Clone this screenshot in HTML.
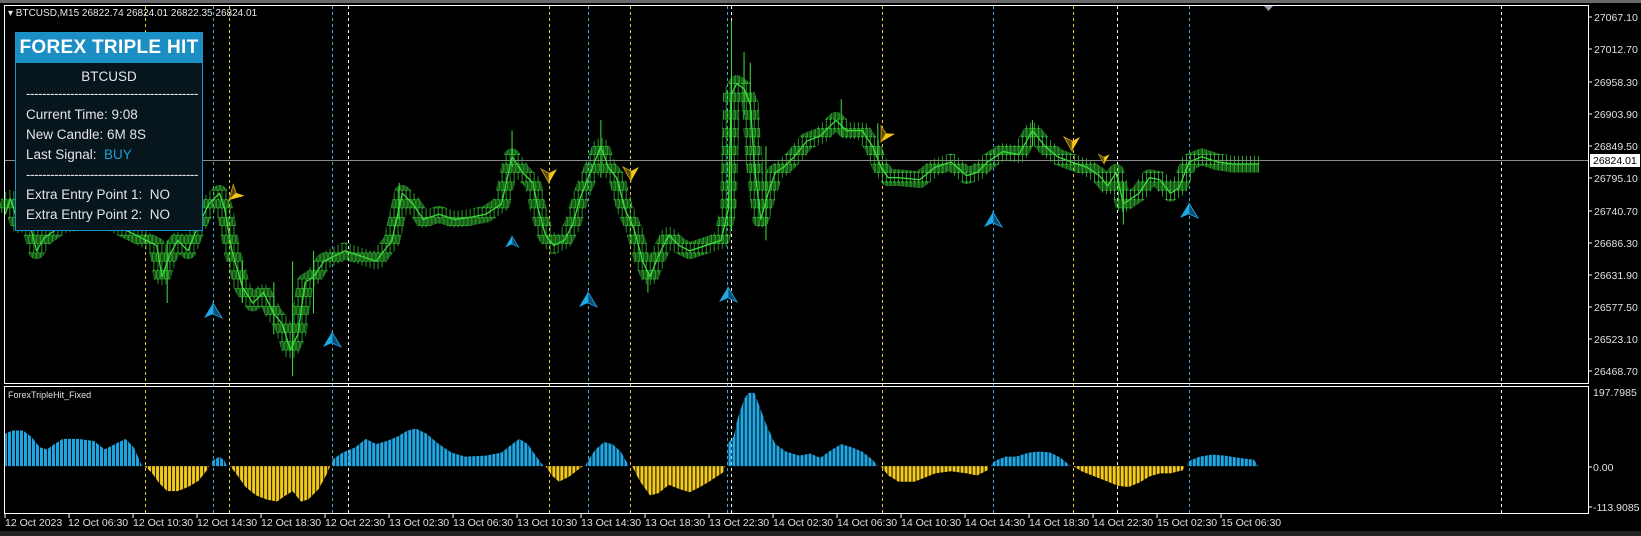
<!DOCTYPE html>
<html><head><meta charset="utf-8"><style>
html,body{margin:0;padding:0;background:#000;width:1641px;height:536px;overflow:hidden;font-family:"Liberation Sans",Arial,sans-serif}
#p{position:absolute;left:15px;top:32px;width:188px;height:199px;background:#07151c;border:1px solid #1d93c6;box-sizing:border-box}
#p .t{height:30px;background:#1b8fc3;color:#fff;font-weight:bold;font-size:19px;letter-spacing:0.3px;text-align:center;line-height:30px;white-space:nowrap;font-family:"Liberation Sans",sans-serif}
#p .l{position:absolute;left:10px;color:#e4e4e4;font-size:13.5px;white-space:nowrap}
</style></head><body>
<svg width="1641" height="536" style="position:absolute;left:0;top:0" xmlns="http://www.w3.org/2000/svg">
<defs>
<pattern id="bl" patternUnits="userSpaceOnUse" width="3.83" height="10"><rect width="2.9" height="10" fill="#1ea8e6"/></pattern>
<pattern id="yl" patternUnits="userSpaceOnUse" width="3.83" height="10"><rect width="2.9" height="10" fill="#f5cc18"/></pattern>
<pattern id="cd" patternUnits="userSpaceOnUse" width="3.83" height="17"><rect x="1.4" width="0.7" height="17" fill="#34c834"/><rect x="0.5" y="4" width="2.6" height="8" fill="none" stroke="#3ee03e" stroke-width="0.6"/></pattern>
</defs>
<rect x="0" y="0" width="1641" height="3" fill="#6a6a6a"/>
<rect x="0" y="531" width="1641" height="5" fill="#222"/>
<path d="M4.5 5.5H1588.5V383.5H4.5Z M4.5 386.5H1588.5V513.5H4.5Z" fill="none" stroke="#fff" stroke-width="1"/>
<g stroke-width="1" stroke-dasharray="3 3" fill="none">
<path d="M145.5 6V513M229.5 6V513M549.5 6V513M630.5 6V513M882.5 6V513M1073.5 6V513" stroke="#e8c64a"/>
<path d="M213.5 6V513M332.5 6V513M588.5 6V513M727.5 6V513M993.5 6V513M1189.5 6V513" stroke="#4aa6d8"/>
<path d="M348.5 6V513M731.5 6V513M1117.5 6V513M1501.5 6V513" stroke="#fff"/>
</g>
<line x1="5" y1="160.5" x2="1588" y2="160.5" stroke="#8a8a8a"/>
<rect x="1590" y="154" width="50" height="13" fill="#fff"/>
<text x="1593" y="164" font-size="10.5" fill="#000">26824.01</text>
<g font-size="10.5" fill="#e0e0e0">
<text x="1594" y="21">27067.10</text><text x="1594" y="53">27012.70</text><text x="1594" y="86">26958.30</text><text x="1594" y="118">26903.90</text><text x="1594" y="150">26849.50</text><text x="1594" y="182">26795.10</text><text x="1594" y="215">26740.70</text><text x="1594" y="247">26686.30</text><text x="1594" y="279">26631.90</text><text x="1594" y="311">26577.50</text><text x="1594" y="343">26523.10</text><text x="1594" y="375">26468.70</text>
<text x="1593" y="396">197.7985</text><text x="1593" y="471">0.00</text><text x="1593" y="511">-113.9085</text>
</g>
<g stroke="#fff"><path d="M1588 17h4M1588 49h4M1588 82h4M1588 114h4M1588 146h4M1588 178h4M1588 211h4M1588 243h4M1588 275h4M1588 307h4M1588 339h4M1588 371h4M1588 467h4M1588 507h4"/></g>
<g font-size="10.5" fill="#e0e0e0">
<text x="5" y="526">12 Oct 2023</text><text x="68" y="526">12 Oct 06:30</text><text x="133" y="526">12 Oct 10:30</text><text x="197" y="526">12 Oct 14:30</text><text x="261" y="526">12 Oct 18:30</text><text x="325" y="526">12 Oct 22:30</text><text x="389" y="526">13 Oct 02:30</text><text x="453" y="526">13 Oct 06:30</text><text x="517" y="526">13 Oct 10:30</text><text x="581" y="526">13 Oct 14:30</text><text x="645" y="526">13 Oct 18:30</text><text x="709" y="526">13 Oct 22:30</text><text x="773" y="526">14 Oct 02:30</text><text x="837" y="526">14 Oct 06:30</text><text x="901" y="526">14 Oct 10:30</text><text x="965" y="526">14 Oct 14:30</text><text x="1029" y="526">14 Oct 18:30</text><text x="1093" y="526">14 Oct 22:30</text><text x="1157" y="526">15 Oct 02:30</text><text x="1221" y="526">15 Oct 06:30</text>
</g>
<g stroke="#fff"><path d="M5 514v4M69 514v4M133 514v4M197 514v4M261 514v4M325 514v4M389 514v4M453 514v4M517 514v4M581 514v4M645 514v4M709 514v4M773 514v4M837 514v4M901 514v4M965 514v4M1029 514v4M1093 514v4M1157 514v4M1221 514v4"/></g>
<text x="8" y="16" font-size="10" fill="#e8e8e8">▾ BTCUSD,M15  26822.74 26824.01 26822.35 26824.01</text>
<path d="M1264 6h9l-4.5 5z" fill="#8a98a8"/>
<text x="8" y="398" font-size="9" fill="#e0e0e0">ForexTripleHit_Fixed</text>
<g transform="scale(1.045)">
<polyline fill="none" stroke="url(#cd)" stroke-width="16" stroke-linejoin="round" points="5,205 10,190 18,215 25,200 35,240 42,228 60,215 100,210 150,235 155,265 162,245 170,230 180,240 190,215 200,195 210,185 215,200 222,240 232,275 242,290 252,280 262,300 270,310 278,335 285,320 292,270 300,265 310,250 320,245 330,240 345,245 360,250 375,230 385,185 395,195 405,210 420,205 435,210 450,208 465,205 480,195 490,150 500,165 510,175 515,200 522,225 530,235 540,230 548,215 555,190 565,165 575,140 582,160 590,170 598,200 607,220 615,250 622,265 630,245 640,225 650,235 660,240 675,235 690,230 697,200 700,90 705,80 712,85 718,100 722,160 728,210 735,185 742,165 750,160 760,150 772,135 785,130 800,115 810,125 825,125 835,140 843,160 850,170 860,170 880,172 895,160 910,155 925,168 935,165 945,155 960,145 975,148 988,125 1000,140 1012,150 1025,155 1040,160 1052,168 1060,178 1068,165 1075,195 1090,185 1100,170 1110,172 1120,185 1128,180 1138,155 1150,150 1165,155 1180,157 1205,157"/>
<polyline fill="none" stroke="#3ad83a" stroke-width="1.3" stroke-linejoin="round" points="5,205 10,190 18,215 25,200 35,240 42,228 60,215 100,210 150,235 155,265 162,245 170,230 180,240 190,215 200,195 210,185 215,200 222,240 232,275 242,290 252,280 262,300 270,310 278,335 285,320 292,270 300,265 310,250 320,245 330,240 345,245 360,250 375,230 385,185 395,195 405,210 420,205 435,210 450,208 465,205 480,195 490,150 500,165 510,175 515,200 522,225 530,235 540,230 548,215 555,190 565,165 575,140 582,160 590,170 598,200 607,220 615,250 622,265 630,245 640,225 650,235 660,240 675,235 690,230 697,200 700,90 705,80 712,85 718,100 722,160 728,210 735,185 742,165 750,160 760,150 772,135 785,130 800,115 810,125 825,125 835,140 843,160 850,170 860,170 880,172 895,160 910,155 925,168 935,165 945,155 960,145 975,148 988,125 1000,140 1012,150 1025,155 1040,160 1052,168 1060,178 1068,165 1075,195 1090,185 1100,170 1110,172 1120,185 1128,180 1138,155 1150,150 1165,155 1180,157 1205,157"/>
<g stroke="#3ad83a" stroke-width="1"><path d="M700 20V220M712 50V110M718 60V100M733 140V230M805 95V130M840 118V150M280 250V360M490 125V160M575 115V170M620 260V280M160 230V290M988 115V140M1075 175V215M262 270V320M300 240V300M232 250V290M382 175V210"/></g>
<polygon fill="url(#bl)" points="5,446 5,415 12,412 22,412 30,418 38,428 45,430 52,425 60,420 75,420 90,422 100,430 110,425 120,420 128,428 136,446"/>
<polygon fill="url(#yl)" points="138,446 145,452 152,462 160,470 170,470 180,466 190,460 198,450 200,446"/>
<polygon fill="url(#bl)" points="203,446 203,441 210,437 215,441 217,446"/>
<polygon fill="url(#yl)" points="220,446 225,452 235,466 245,474 255,478 265,480 272,475 280,470 288,480 295,478 305,468 312,455 316,446"/>
<polygon fill="url(#bl)" points="318,446 318,440 328,433 340,428 350,420 360,425 370,422 380,418 390,412 398,410 408,415 420,425 432,433 445,437 465,436 480,433 490,425 497,420 505,425 512,435 520,446"/>
<polygon fill="url(#yl)" points="522,446 528,455 535,461 545,456 555,448 558,446"/>
<polygon fill="url(#bl)" points="560,446 563,440 570,430 578,423 586,425 594,432 602,446"/>
<polygon fill="url(#yl)" points="605,446 612,460 622,474 630,472 640,464 650,468 660,471 670,466 680,460 692,452 694,446"/>
<polygon fill="url(#bl)" points="696,446 696,425 702,418 706,400 712,382 716,376 722,376 728,392 734,408 742,425 752,432 765,436 775,434 785,438 795,431 805,425 815,428 825,432 835,440 840,446"/>
<polygon fill="url(#yl)" points="843,446 850,455 860,461 875,461 885,457 895,453 910,451 925,453 935,455 945,450 946,446"/>
<polygon fill="url(#bl)" points="948,446 952,441 962,437 972,437 985,433 995,432 1005,433 1015,438 1022,444 1024,446"/>
<polygon fill="url(#yl)" points="1027,446 1035,451 1045,455 1058,460 1070,465 1080,466 1090,462 1100,456 1110,453 1120,453 1132,450 1133,446"/>
<polygon fill="url(#bl)" points="1136,446 1138,441 1148,437 1160,435 1172,436 1185,438 1200,440 1204,446"/>
</g>
<g>
<g transform="translate(213,303)"><path d="M0 0L-9 15L0 11Z" fill="#1ea8e6"/><path d="M0 0L9 15L0 11Z" fill="#0b4f72" stroke="#1ea8e6" stroke-width="0.8"/></g>
<g transform="translate(332,332)"><path d="M0 0L-9 15L0 11Z" fill="#1ea8e6"/><path d="M0 0L9 15L0 11Z" fill="#0b4f72" stroke="#1ea8e6" stroke-width="0.8"/></g>
<g transform="translate(512,236) scale(0.75)"><path d="M0 0L-9 15L0 11Z" fill="#1ea8e6"/><path d="M0 0L9 15L0 11Z" fill="#0b4f72" stroke="#1ea8e6" stroke-width="0.8"/></g>
<g transform="translate(588,292)"><path d="M0 0L-9 15L0 11Z" fill="#1ea8e6"/><path d="M0 0L9 15L0 11Z" fill="#0b4f72" stroke="#1ea8e6" stroke-width="0.8"/></g>
<g transform="translate(728,287)"><path d="M0 0L-9 15L0 11Z" fill="#1ea8e6"/><path d="M0 0L9 15L0 11Z" fill="#0b4f72" stroke="#1ea8e6" stroke-width="0.8"/></g>
<g transform="translate(993,212)"><path d="M0 0L-9 15L0 11Z" fill="#1ea8e6"/><path d="M0 0L9 15L0 11Z" fill="#0b4f72" stroke="#1ea8e6" stroke-width="0.8"/></g>
<g transform="translate(1189,203)"><path d="M0 0L-9 15L0 11Z" fill="#1ea8e6"/><path d="M0 0L9 15L0 11Z" fill="#0b4f72" stroke="#1ea8e6" stroke-width="0.8"/></g>
</g>
<g>
<g transform="translate(229,200) rotate(-135)"><path d="M0 0L-8 14L0 10Z" fill="#f5c518"/><path d="M0 0L8 14L0 10Z" fill="#5a4a08" stroke="#d4a818" stroke-width="0.8"/></g>
<g transform="translate(549,183) rotate(180)"><path d="M0 0L-8 14L0 10Z" fill="#f5c518"/><path d="M0 0L8 14L0 10Z" fill="#5a4a08" stroke="#d4a818" stroke-width="0.8"/></g>
<g transform="translate(631,181) rotate(180)"><path d="M0 0L-8 14L0 10Z" fill="#f5c518"/><path d="M0 0L8 14L0 10Z" fill="#5a4a08" stroke="#d4a818" stroke-width="0.8"/></g>
<g transform="translate(881,142) rotate(-150)"><path d="M0 0L-8 14L0 10Z" fill="#f5c518"/><path d="M0 0L8 14L0 10Z" fill="#5a4a08" stroke="#d4a818" stroke-width="0.8"/></g>
<g transform="translate(1072,151) rotate(180)"><path d="M0 0L-8 14L0 10Z" fill="#f5c518"/><path d="M0 0L8 14L0 10Z" fill="#5a4a08" stroke="#d4a818" stroke-width="0.8"/></g>
<g transform="translate(1104,164) rotate(180) scale(0.7)"><path d="M0 0L-8 14L0 10Z" fill="#f5c518"/><path d="M0 0L8 14L0 10Z" fill="#5a4a08" stroke="#d4a818" stroke-width="0.8"/></g>
</g>
</svg>
<div id="p">
<div class="t">FOREX TRIPLE HIT</div>
<div class="l" style="left:0;width:186px;text-align:center;top:36px">BTCUSD</div>
<div class="l" style="top:53px;letter-spacing:-0.5px">-------------------------------------------</div>
<div class="l" style="top:74px">Current Time: 9:08</div>
<div class="l" style="top:94px">New Candle: 6M 8S</div>
<div class="l" style="top:114px">Last Signal:&nbsp; <span style="color:#1e9fd8">BUY</span></div>
<div class="l" style="top:134px;letter-spacing:-0.5px">-------------------------------------------</div>
<div class="l" style="top:154px">Extra Entry Point 1:&nbsp; NO</div>
<div class="l" style="top:174px">Extra Entry Point 2:&nbsp; NO</div>
</div>
</body></html>
